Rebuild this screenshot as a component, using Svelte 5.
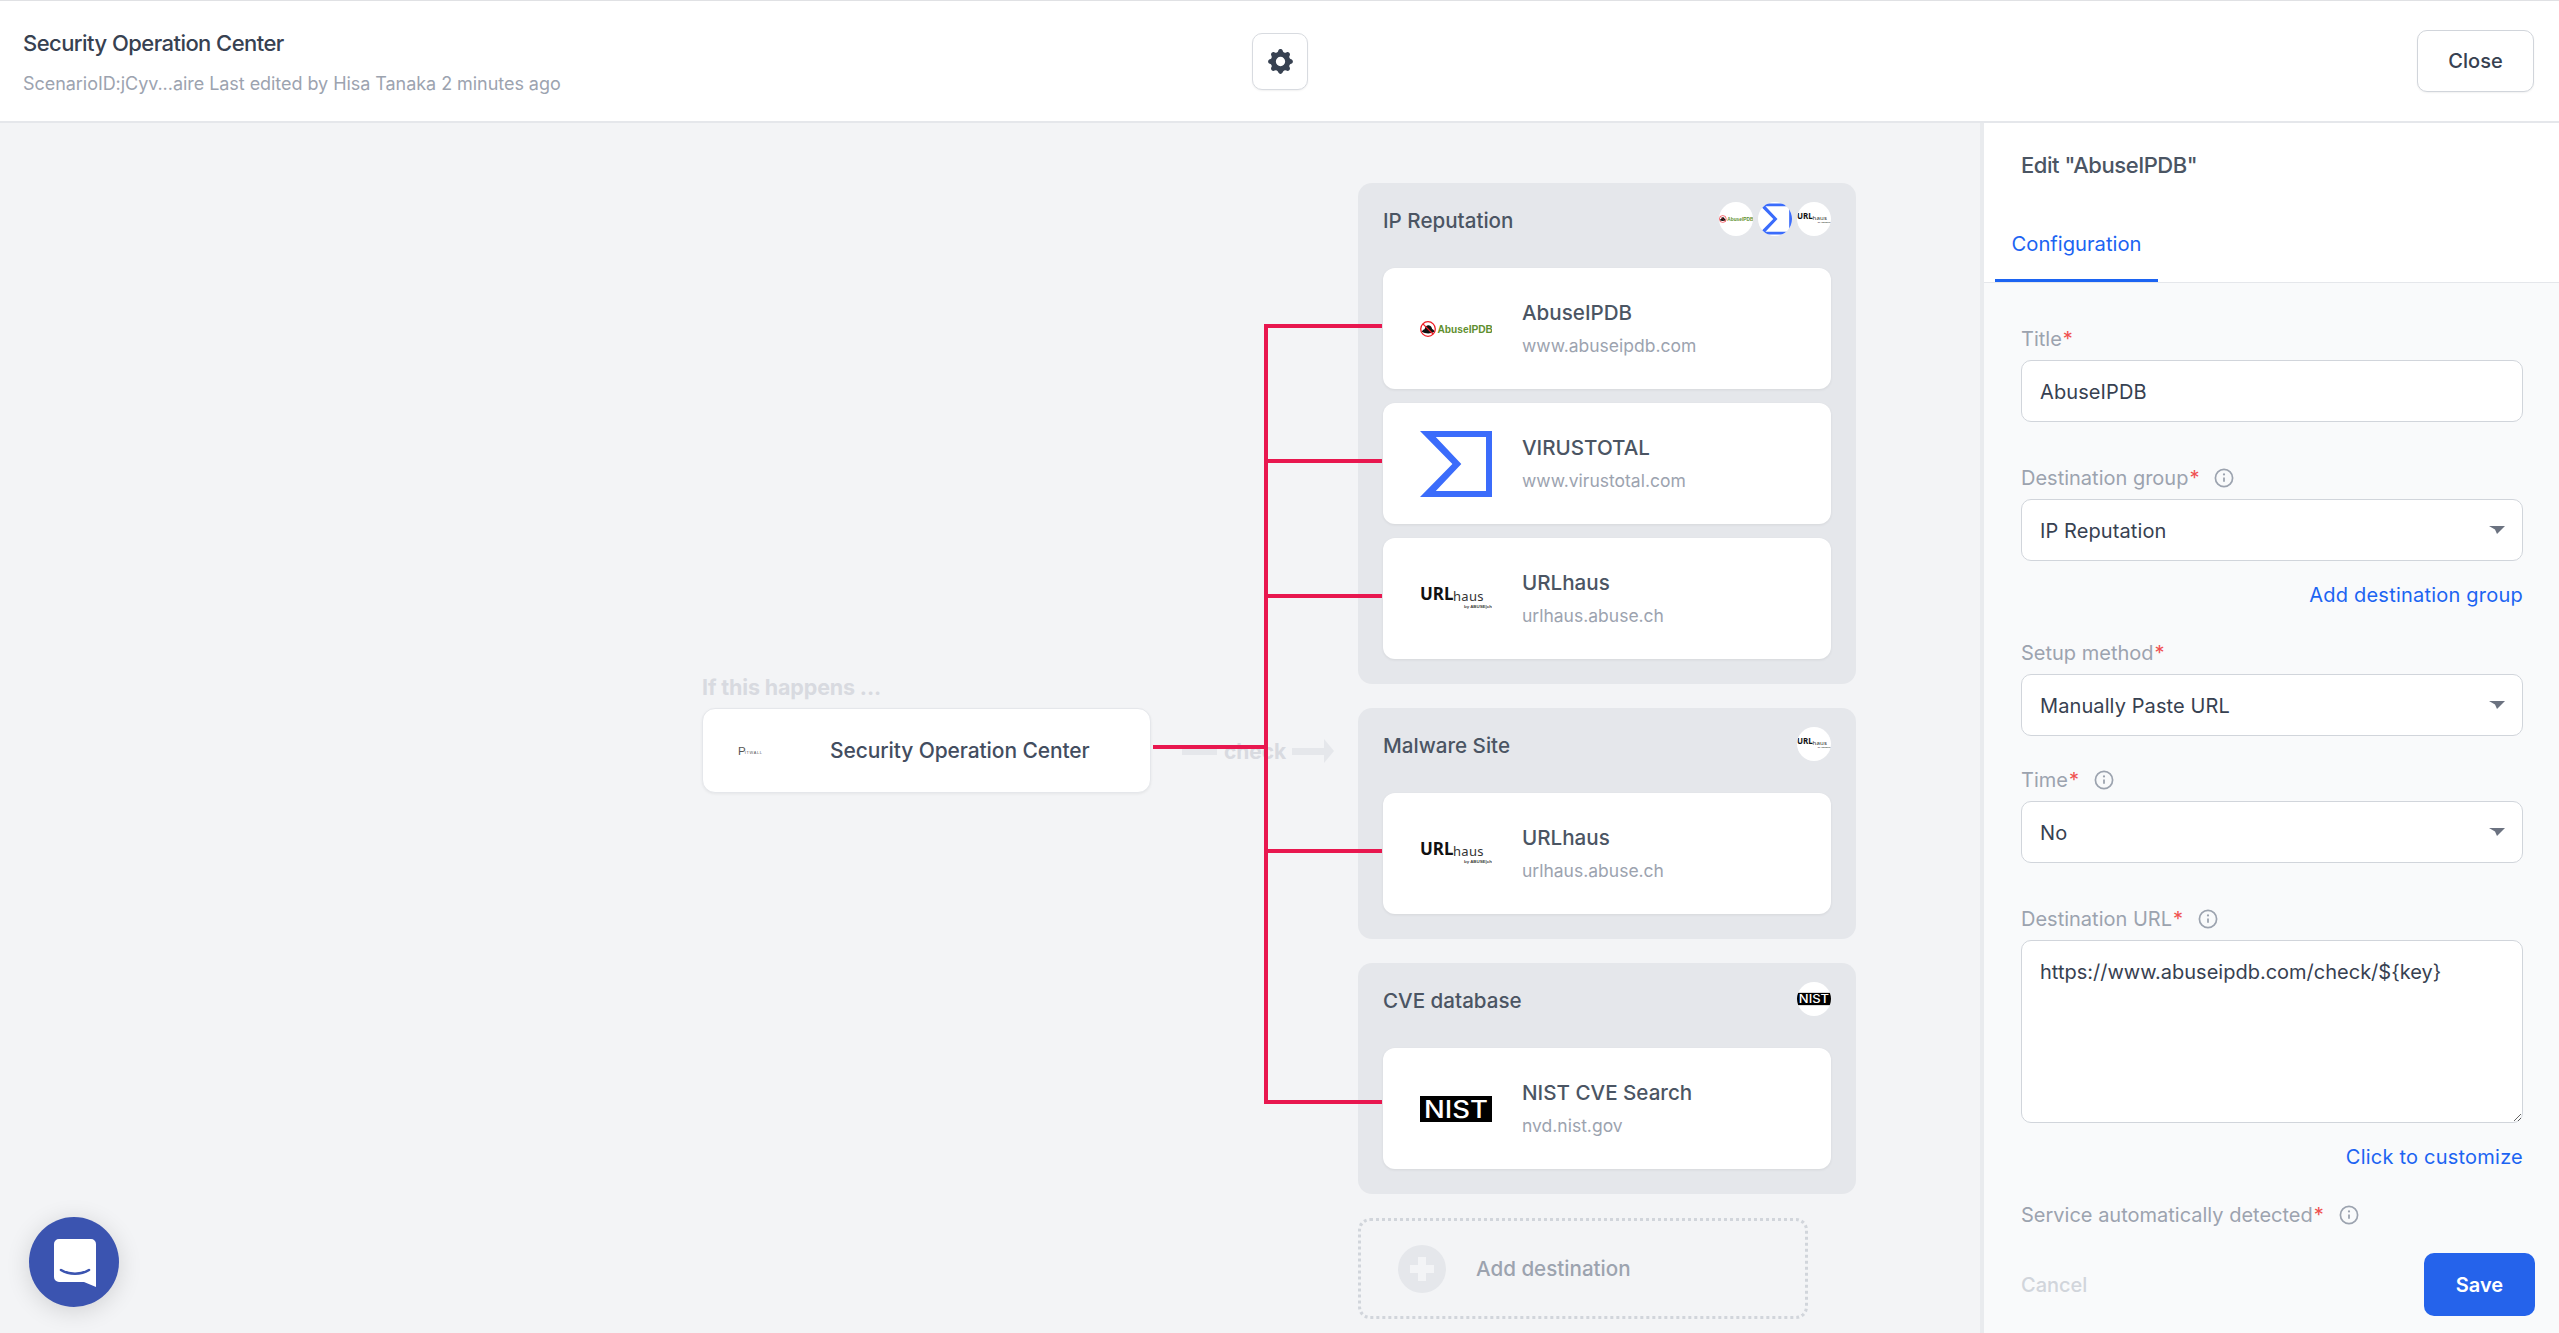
<script>
  const services = {
    abuse: { name: 'AbuseIPDB', url: 'www.abuseipdb.com' },
    virus: { name: 'VIRUSTOTAL', url: 'www.virustotal.com' },
    haus: { name: 'URLhaus', url: 'urlhaus.abuse.ch' },
    nist: { name: 'NIST CVE Search', url: 'nvd.nist.gov' }
  };
  const groups = [
    { title: 'IP Reputation', items: ['abuse', 'virus', 'haus'] },
    { title: 'Malware Site', items: ['haus'] },
    { title: 'CVE database', items: ['nist'] }
  ];
  const links = [203, 338, 473, 728, 979];
</script>

{#snippet logo(kind)}
  {#if kind === 'abuse'}
    <svg class="logo-svg" viewBox="0 0 72 72">
      <circle cx="8" cy="36" r="7.300" fill="#fff" stroke="#ee1c25" stroke-width="1.300" />
      <path d="M1.800 38.800c.6-1.800 1.800-2.400 2.800-2.600C5.200 33.200 6.800 32 8.800 32.200c1.900.2 3 1.800 3.400 3.800 1.200.4 2 1.400 2.200 2.800-3.800 2.200-8.800 2.200-12.600 0z" fill="#111" />
      <path d="M3 31 13 41" stroke="#ee1c25" stroke-width="1.100" />
      <text x="17.500" y="39.800" class="t-abuse">AbuseIPDB</text>
    </svg>
  {:else if kind === 'virus'}
    <svg class="logo-svg" viewBox="0 0 72 72">
      <path fill="#3b6cfb" fill-rule="evenodd" d="M0 3H72V69H0L32.400 36ZM15.800 9 41.300 36 15.800 63H66V9Z" />
    </svg>
  {:else if kind === 'haus'}
    <svg class="logo-svg" viewBox="0 0 72 72">
      <text x="0" y="37" class="t-url">URL</text>
      <text x="33" y="37.500" class="t-haus">haus</text>
      <text x="44" y="44.500" class="t-by">by ABUSE|ch</text>
    </svg>
  {:else if kind === 'nist'}
    <svg class="logo-svg" viewBox="0 0 72 72">
      <rect x="0" y="23" width="72" height="26" fill="#000" />
      <text x="4" y="44.500" class="t-nist" textLength="64" lengthAdjust="spacingAndGlyphs">NIST</text>
    </svg>
  {/if}
{/snippet}

{#snippet info()}
  <svg class="info" viewBox="0 0 20 20" fill="none" stroke="#9ca3af" stroke-width="1.7">
    <circle cx="10" cy="10" r="8.600" />
    <path d="M10 9.400v4.400" stroke-width="1.800" />
    <circle cx="10" cy="6.400" r="1.100" fill="#9ca3af" stroke="none" />
  </svg>
{/snippet}

{#snippet caret()}
  <svg class="caret" viewBox="0 0 16 8"><path d="M0 0H16L8 8 6 3.500Z" fill="#6b7280" /></svg>
{/snippet}

<div class="page">
  <header class="top">
    <div class="top-left">
      <div class="scenario">Security Operation Center</div>
      <div class="meta">ScenarioID:jCyv...aire Last edited by Hisa Tanaka 2 minutes ago</div>
    </div>
    <button class="gear" aria-label="Settings">
      <svg viewBox="0 0 20 20" width="31" height="31" fill="#374151">
        <path fill-rule="evenodd" clip-rule="evenodd" d="M11.49 3.17c-.38-1.56-2.6-1.56-2.98 0a1.532 1.532 0 0 1-2.286.948c-1.372-.836-2.942.734-2.106 2.106.54.886.061 2.042-.947 2.287-1.561.379-1.561 2.6 0 2.978a1.532 1.532 0 0 1 .947 2.287c-.836 1.372.734 2.942 2.106 2.106a1.532 1.532 0 0 1 2.287.947c.379 1.561 2.6 1.561 2.978 0a1.533 1.533 0 0 1 2.287-.947c1.372.836 2.942-.734 2.106-2.106a1.533 1.533 0 0 1 .947-2.287c1.561-.379 1.561-2.6 0-2.978a1.532 1.532 0 0 1-.947-2.287c.836-1.372-.734-2.942-2.106-2.106a1.532 1.532 0 0 1-2.287-.947zM10 13a3 3 0 1 0 0-6 3 3 0 0 0 0 6z" />
      </svg>
    </button>
    <button class="close">Close</button>
  </header>

  <div class="main">
    <section class="canvas">
      <div class="trigger-wrap">
        <div class="if">If this happens ...</div>
        <div class="trigger">
          <svg class="pit" viewBox="0 0 32 20">
            <text x="0" y="14" class="t-p">P</text>
            <text x="7" y="13" class="t-itwall">ITWALL</text>
          </svg>
          <span>Security Operation Center</span>
        </div>
      </div>

      <div class="check">
        <span class="bar b1"></span>
        <span class="check-text">check</span>
        <span class="bar b2"></span>
        <span class="head"></span>
      </div>

      <div class="dest">
        {#each groups as g}
          <div class="group">
            <div class="group-head">
              <span class="group-title">{g.title}</span>
              <div class="avatars">
                {#each g.items as i}
                  <span class="avatar">{@render logo(i)}</span>
                {/each}
              </div>
            </div>
            <div class="cards">
              {#each g.items as i}
                <div class="card">
                  <div class="card-logo">{@render logo(i)}</div>
                  <div class="card-text">
                    <div class="card-name">{services[i].name}</div>
                    <div class="card-url">{services[i].url}</div>
                  </div>
                </div>
              {/each}
            </div>
          </div>
        {/each}
        <div class="add">
          <span class="plus"><i class="h"></i><i class="v"></i></span>
          <span class="add-text">Add destination</span>
        </div>
      </div>

      <svg class="wires" width="1400" height="1100">
        <path d="M1153 624H1266" />
        <path d="M1266 201V981" />
        {#each links as y}
          <path d="M1266 {y}H1382" />
        {/each}
      </svg>

      <div class="chat">
        <svg viewBox="0 0 42 48" width="42" height="48">
          <path fill="#fff" d="M5 0H37a5 5 0 0 1 5 5V48L30 43H5a5 5 0 0 1-5-5V5a5 5 0 0 1 5-5Z" />
          <path fill="none" stroke="#3b54b0" stroke-width="2.600" stroke-linecap="round" d="M7 31c8 5 20 5 28 0" />
        </svg>
      </div>
    </section>

    <aside class="panel">
      <div class="panel-head">
        <div class="edit">Edit "AbuseIPDB"</div>
        <div class="tabs"><span class="tab">Configuration</span></div>
      </div>
      <div class="form">
        <div class="label">Title<b>*</b></div>
        <input class="ctl" value="AbuseIPDB" />

        <div class="label mt41">Destination group<b>*</b>{@render info()}</div>
        <div class="sel"><div class="ctl sel-box">IP Reputation</div>{@render caret()}</div>
        <a class="link l1" href="#a">Add destination group</a>

        <div class="label mt28">Setup method<b>*</b></div>
        <div class="sel"><div class="ctl sel-box">Manually Paste URL</div>{@render caret()}</div>

        <div class="label mt29">Time<b>*</b>{@render info()}</div>
        <div class="sel"><div class="ctl sel-box">No</div>{@render caret()}</div>

        <div class="label mt41">Destination URL<b>*</b>{@render info()}</div>
        <textarea class="ctl area" value={'https://www.abuseipdb.com/check/${key}'}></textarea>
        <a class="link l2" href="#b">Click to customize</a>

        <div class="label mt28">Service automatically detected<b>*</b>{@render info()}</div>
      </div>
      <div class="foot">
        <span class="cancel">Cancel</span>
        <button class="save">Save</button>
      </div>
    </aside>
  </div>
</div>

<style>
  :global(body) {
    margin: 0;
    font-family: Inter, "Noto Sans", sans-serif;
    color: #374151;
    background: #f3f4f6;
  }
  .page {
    width: 2559px;
    height: 1333px;
    display: flex;
    flex-direction: column;
    overflow: hidden;
  }
  .top {
    height: 123px;
    box-sizing: border-box;
    flex: none;
    background: #fff;
    border-top: 1px solid #e0e1e4;
    border-bottom: 2px solid #e5e7eb;
    display: flex;
    align-items: center;
    padding: 0 25px 0 23px;
  }
  .top-left { width: 1229px; padding-top: 2px; }
  .scenario {
    font-size: 22px;
    font-weight: 500;
    letter-spacing: -0.55px;
    line-height: 30px;
    color: #374151;
  }
  .meta {
    font-size: 18px;
    line-height: 26px;
    margin-top: 13px;
    color: #9ca3af;
    letter-spacing: -0.05px;
  }
  .gear {
    width: 56px;
    height: 57px;
    background: #fff;
    border: 1px solid #d8dbe0;
    border-radius: 10px;
    box-shadow: 0 1px 2px rgba(0,0,0,.06);
    display: flex;
    align-items: center;
    justify-content: center;
    padding: 0;
    margin-top: 1px;
  }
  .close {
    margin-left: auto;
    width: 117px;
    height: 62px;
    background: #fff;
    border: 1px solid #d1d5db;
    border-radius: 10px;
    font: 500 20px Inter, sans-serif;
    color: #374151;
    box-shadow: 0 1px 2px rgba(0,0,0,.06);
    padding: 0;
  }
  .main { flex: 1; display: flex; min-height: 0; }
  .canvas { position: relative; width: 1980px; flex: none; background: #f3f4f6; }

  .trigger-wrap { position: absolute; left: 702px; top: 549px; width: 449px; }
  .if {
    font-size: 21.5px;
    font-weight: 700;
    line-height: 30px;
    color: #d8dae0;
    letter-spacing: -0.15px;
  }
  .trigger {
    height: 85px;
    margin-top: 6px;
    background: #fff;
    border-radius: 13px;
    border: 1px solid #e5e7eb;
    box-sizing: border-box;
    box-shadow: 0 1px 3px rgba(0,0,0,.06);
    display: flex;
    align-items: center;
    font-size: 21px;
    font-weight: 500;
    color: #434d5f;
    letter-spacing: -0.1px;
    padding-left: 35px;
  }
  .pit { width: 31px; height: 20px; margin-right: 61px; }
  .t-p { font: 400 12px "Liberation Sans", sans-serif; fill: #555; }
  .t-itwall { font: 400 4px "Liberation Sans", sans-serif; fill: #555; letter-spacing: .7px; }

  .check {
    position: absolute;
    left: 1182px;
    top: 610px;
    height: 36px;
    display: flex;
    align-items: center;
  }
  .bar { height: 7px; background: #e5e7eb; display: block; }
  .b1 { width: 35px; margin-right: 7px; }
  .b2 { width: 32px; margin-left: 6px; }
  .head {
    width: 0; height: 0;
    border-left: 10px solid #e5e7eb;
    border-top: 12px solid transparent;
    border-bottom: 12px solid transparent;
  }
  .check-text { font-size: 21px; font-weight: 700; color: #d8dae0; letter-spacing: -0.1px; }

  .wires { position: absolute; left: 0; top: 0; fill: none; stroke: #e8174f; stroke-width: 4; pointer-events: none; }

  .dest {
    position: absolute;
    left: 1358px;
    top: 60px;
    width: 498px;
    display: flex;
    flex-direction: column;
    gap: 24px;
  }
  .group {
    background: #e5e7eb;
    border-radius: 14px;
    padding: 19px 25px 25px;
  }
  .group-head {
    height: 34px;
    margin-bottom: 32px;
    display: flex;
    align-items: center;
    justify-content: space-between;
  }
  .group-title { font-size: 20.6px; font-weight: 500; color: #4b5563; padding-top: 2px; }
  .avatars { display: flex; gap: 5px; }
  .avatar {
    width: 34px;
    height: 34px;
    border-radius: 50%;
    background: #fff;
    overflow: hidden;
    display: block;
  }
  .logo-svg { display: block; width: 100%; height: 100%; }
  .cards { display: flex; flex-direction: column; gap: 14px; }
  .card {
    height: 121px;
    background: #fff;
    border-radius: 12px;
    box-shadow: 0 1px 3px rgba(0,0,0,.07);
    display: flex;
    align-items: center;
    padding-left: 37px;
  }
  .card-logo { width: 72px; height: 72px; flex: none; margin-right: 30px; }
  .card-text { padding-top: 2px; }
  .card-name { font-size: 20.6px; font-weight: 500; line-height: 30px; color: #4b5563; }
  .card-url { font-size: 17.5px; line-height: 30px; margin-top: 3px; color: #9ca3af; }

  .t-abuse { font: 700 10.2px "Liberation Sans", sans-serif; fill: #5f8f2f; }
  .t-url { font: 700 17px "Noto Sans", sans-serif; fill: #111; }
  .t-haus { font: 400 13px "Noto Sans", sans-serif; fill: #333; letter-spacing: .3px; }
  .t-by { font: 700 4.4px "Liberation Sans", sans-serif; fill: #444; }
  .t-nist { font: 500 24px Inter, sans-serif; fill: #fff; }

  .add {
    height: 101px;
    width: 450px;
    box-sizing: border-box;
    border: 3px dotted #d1d5db;
    border-radius: 12px;
    display: flex;
    align-items: center;
    padding-left: 37px;
  }
  .plus {
    width: 48px;
    height: 48px;
    border-radius: 50%;
    background: #e5e7eb;
    position: relative;
    margin-right: 30px;
  }
  .plus i { position: absolute; background: #f3f4f6; display: block; }
  .plus .h { left: 12px; right: 12px; top: 20px; height: 8px; }
  .plus .v { top: 12px; bottom: 12px; left: 20px; width: 8px; }
  .add-text { font-size: 20.6px; font-weight: 500; color: #9ca3af; }

  .chat {
    position: absolute;
    left: 29px;
    top: 1094px;
    width: 90px;
    height: 90px;
    border-radius: 50%;
    background: #3b54b0;
    box-shadow: 0 4px 24px rgba(0,0,0,.14);
    display: flex;
    align-items: center;
    justify-content: center;
  }
  .chat svg { margin-left: 1px; margin-top: 1px; }

  .panel {
    flex: 1;
    background: #f9fafb;
    border-left: 4px solid #e9ebee;
    box-sizing: border-box;
    display: flex;
    flex-direction: column;
    min-width: 0;
  }
  .panel-head { background: #fff; border-bottom: 1px solid #e5e7eb; height: 160px; box-sizing: border-box; padding-top: 27px; }
  .edit {
    padding-left: 37px;
    font-size: 22px;
    line-height: 30px;
    font-weight: 500;
    letter-spacing: -0.45px;
    color: #4b5563;
  }
  .tabs { margin-top: 49px; padding-left: 11px; }
  .tab {
    display: block;
    width: 163px;
    height: 53px;
    box-sizing: border-box;
    text-align: center;
    border-bottom: 3px solid #1c64f2;
    color: #1c64f2;
    font-size: 20.2px;
    line-height: 30px;
  }
  .form { flex: 1; padding: 41px 36px 0 37px; min-height: 0; }
  .label {
    font-size: 20px;
    line-height: 30px;
    color: #9ca3af;
    display: flex;
    align-items: center;
    margin-bottom: 6px;
  }
  .label b { color: #f05252; font-weight: 400; align-self: flex-start; margin-left: 1px; }
  .mt41 { margin-top: 41px; }
  .mt28 { margin-top: 28px; }
  .mt29 { margin-top: 29px; }
  .info { width: 20px; height: 20px; margin-left: 15px; }
  .ctl {
    display: block;
    width: 100%;
    height: 62px;
    box-sizing: border-box;
    background: #fff;
    border: 1px solid #d1d5db;
    border-radius: 10px;
    padding: 1px 18px 0;
    font: 400 20px Inter, sans-serif;
    letter-spacing: 0.1px;
    color: #374151;
    outline: none;
    margin: 0;
  }
  .sel { position: relative; }
  .sel-box { display: flex; align-items: center; }
  .caret { position: absolute; right: 18px; top: 27px; width: 16px; height: 8px; }
  .area { height: 183px; padding: 16px 18px 14px; line-height: 30px; resize: vertical; letter-spacing: 0; }
  .link {
    display: block;
    text-align: right;
    color: #1c64f2;
    font-size: 20px;
    letter-spacing: 0.22px;
    line-height: 30px;
    text-decoration: none;
  }
  .l1 { margin-top: 19px; }
  .l2 { margin-top: 19px; }
  .foot {
    height: 80px;
    flex: none;
    box-sizing: border-box;
    padding: 0 24px 17px 37px;
    display: flex;
    align-items: center;
    justify-content: space-between;
  }
  .cancel { font-size: 20px; font-weight: 500; color: #d1d5db; }
  .save {
    width: 111px;
    height: 63px;
    border: 0;
    border-radius: 10px;
    background: #2563eb;
    color: #fff;
    font: 600 20px Inter, sans-serif;
    padding: 0;
  }
</style>
